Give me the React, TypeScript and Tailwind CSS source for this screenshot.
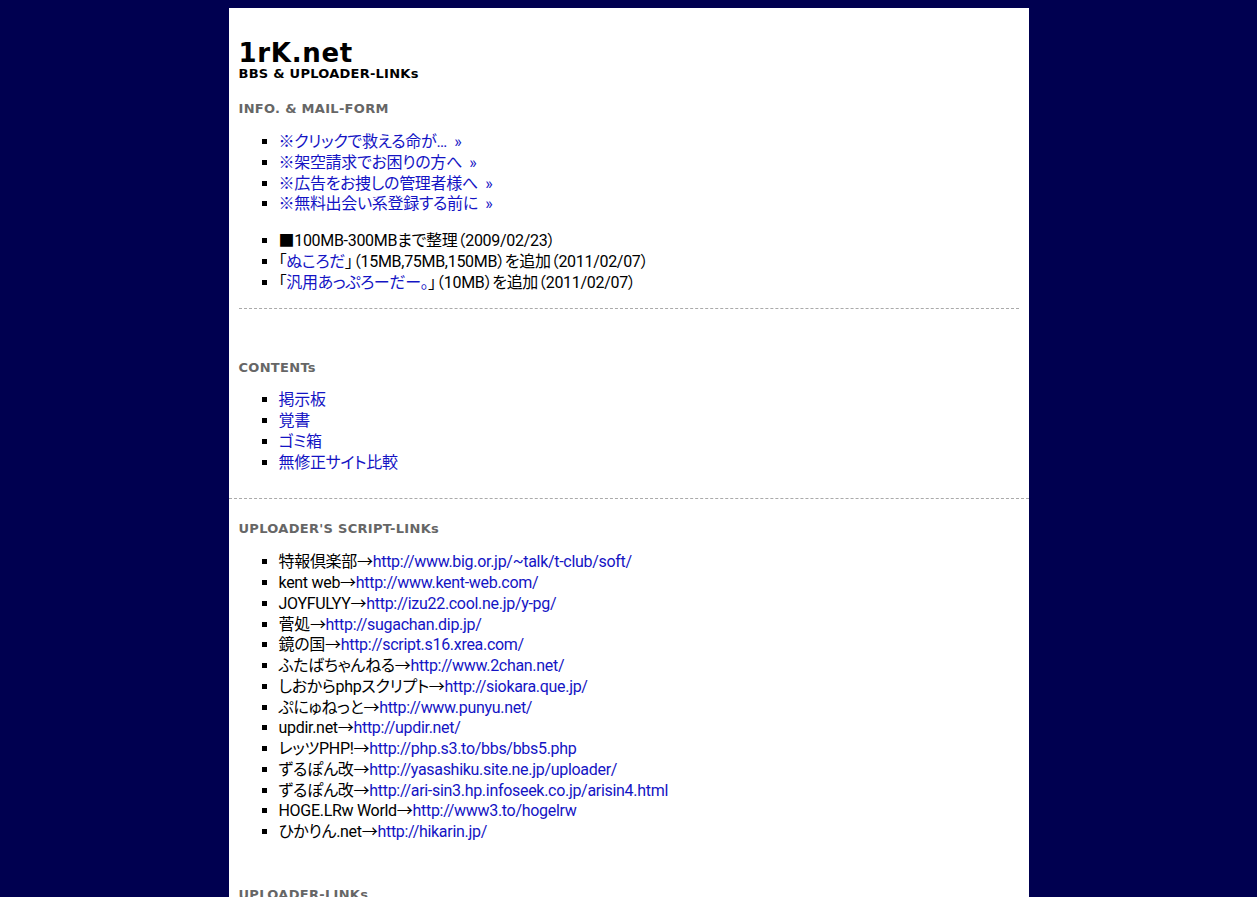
import React from 'react';

const jp = "font-['Roboto','Noto_Sans_CJK_JP',sans-serif] [font-feature-settings:'palt']";
const vd = "font-['DejaVu_Sans','Verdana',sans-serif]";

const infoLinks = [
  '※クリックで救える命が…\u00a0\u00a0»',
  '※架空請求でお困りの方へ\u00a0\u00a0»',
  '※広告をお捜しの管理者様へ\u00a0\u00a0»',
  '※無料出会い系登録する前に\u00a0\u00a0»',
];

const contents = ['掲示板', '覚書', 'ゴミ箱', '無修正サイト比較'];

const scripts: [string, string][] = [
  ['特報倶楽部', 'http://www.big.or.jp/~talk/t-club/soft/'],
  ['kent web', 'http://www.kent-web.com/'],
  ['JOYFULYY', 'http://izu22.cool.ne.jp/y-pg/'],
  ['菅処', 'http://sugachan.dip.jp/'],
  ['鏡の国', 'http://script.s16.xrea.com/'],
  ['ふたばちゃんねる', 'http://www.2chan.net/'],
  ['しおからphpスクリプト', 'http://siokara.que.jp/'],
  ['ぷにゅねっと', 'http://www.punyu.net/'],
  ['updir.net', 'http://updir.net/'],
  ['レッツPHP!', 'http://php.s3.to/bbs/bbs5.php'],
  ['ずるぽん改', 'http://yasashiku.site.ne.jp/uploader/'],
  ['ずるぽん改', 'http://ari-sin3.hp.infoseek.co.jp/arisin4.html'],
  ['HOGE.LRw World', 'http://www3.to/hogelrw'],
  ['ひかりん.net', 'http://hikarin.jp/'],
];

const Heading: React.FC<{ children: React.ReactNode; className?: string }> = ({ children, className }) => (
  <h3 className={`${vd} text-[13px] leading-[13px] font-bold tracking-[0.3px] text-[#666666] ${className ?? ''}`}>{children}</h3>
);

const List: React.FC<{ children: React.ReactNode; className?: string }> = ({ children, className }) => (
  <ul className={`${jp} list-[square] pl-10 text-[16px] leading-[20.75px] tracking-[-0.3px] text-black ${className ?? ''}`}>{children}</ul>
);

const A: React.FC<{ children: React.ReactNode }> = ({ children }) => (
  <a href="#" className="text-[#1414c4]">{children}</a>
);

export default function App() {
  return (
    <div className="min-h-screen bg-[#000050] pt-2">
      <div className="mx-auto w-[800px] bg-white pb-10">
        <div className="px-[10px] pt-8">
          <h1 className={`${vd} text-[26px] leading-[26px] font-bold tracking-[0.7px] text-black`}>1rK.net</h1>
          <h2 className={`${vd} mt-[1px] text-[13px] leading-[13px] font-bold tracking-[0.25px] text-black`}>BBS &amp; UPLOADER-LINKs</h2>

          <Heading className="mt-[22px]">INFO. &amp; MAIL-FORM</Heading>
          <List className="mt-[17px]">
            {infoLinks.map((t) => (
              <li key={t}><A>{t}</A></li>
            ))}
          </List>
          <List className="mt-[16px]">
            <li>■100MB-300MBまで整理（2009/02/23）</li>
            <li>「<A>ぬころだ</A>」（15MB,75MB,150MB）を追加（2011/02/07）</li>
            <li>「<A>汎用あっぷろーだー。</A>」（10MB）を追加（2011/02/07）</li>
          </List>
          <div className="mt-[15px] border-t border-dashed border-[#aaaaaa]" />

          <Heading className="mt-[52px]">CONTENTs</Heading>
          <List className="mt-[16px]">
            {contents.map((t) => (
              <li key={t}><A>{t}</A></li>
            ))}
          </List>
        </div>
        <div className="mt-[25px] border-t border-dashed border-[#aaaaaa]" />

        <div className="px-[10px]">
          <Heading className="mt-[23px]">UPLOADER'S SCRIPT-LINKs</Heading>
          <List className="mt-[17px]">
            {scripts.map(([name, url], i) => (
              <li key={i}>
                {name}→<A>{url}</A>
              </li>
            ))}
          </List>
          <Heading className="mt-[45px]">UPLOADER-LINKs</Heading>
        </div>
      </div>
    </div>
  );
}
